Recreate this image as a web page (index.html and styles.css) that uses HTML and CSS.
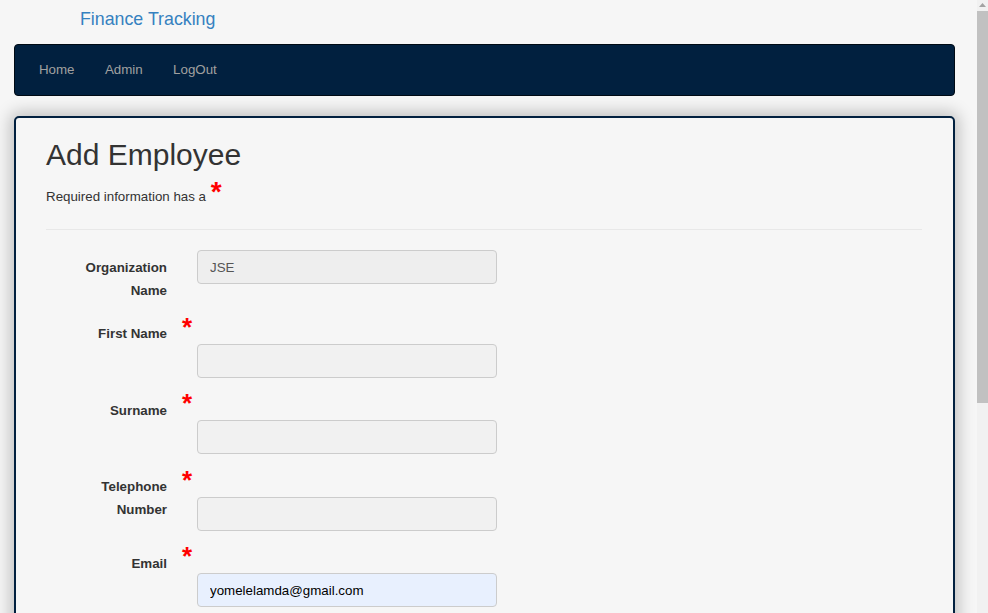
FILE: index.html
```html
<!DOCTYPE html>
<html lang="en">
<head>
<meta charset="utf-8">
<title>Add Employee - Finance Tracking</title>
<link rel="stylesheet" href="styles.css">
</head>
<body>
<div class="page">
  <header class="brand-bar">
    <a class="brand" href="#">Finance Tracking</a>
  </header>
  <nav class="navbar">
    <a class="nav-link" href="#">Home</a>
    <a class="nav-link" href="#">Admin</a>
    <a class="nav-link" href="#">LogOut</a>
  </nav>
  <main class="panel">
    <h2 class="title">Add Employee</h2>
    <p class="hint">Required information has a <span class="req-inline">*</span></p>
    <hr class="divider">
    <form class="form">
      <div class="group">
        <label class="label label-plain">Organization<br>Name</label>
        <div class="field">
          <input class="input input-readonly" type="text" value="JSE" readonly>
        </div>
      </div>
      <div class="group">
        <label class="label">First Name</label>
        <div class="field">
          <span class="req">*</span>
          <input class="input" type="text">
        </div>
      </div>
      <div class="group">
        <label class="label">Surname</label>
        <div class="field">
          <span class="req">*</span>
          <input class="input" type="text">
        </div>
      </div>
      <div class="group">
        <label class="label">Telephone<br>Number</label>
        <div class="field">
          <span class="req">*</span>
          <input class="input" type="text">
        </div>
      </div>
      <div class="group">
        <label class="label">Email</label>
        <div class="field">
          <span class="req">*</span>
          <input class="input input-filled" type="text" value="yomelelamda@gmail.com">
        </div>
      </div>
    </form>
  </main>
</div>
<div class="scrollbar" aria-hidden="true">
  <div class="scroll-button">
    <svg width="11" height="11" viewBox="0 0 11 11"><path d="M2 7 L5.5 3 L9 7 Z" fill="#a3a3a3"/></svg>
  </div>
  <div class="scroll-thumb"></div>
</div>
</body>
</html>
```

FILE: styles.css
```css
html {
  background: #f6f6f6;
}
body {
  margin: 0;
  font-family: "Liberation Sans", Arial, sans-serif;
  font-size: 13.33px;
  color: #333;
  background: #f6f6f6;
}
.page {
  width: 941px;
  margin-left: 14px;
  min-height: 924px;
  display: flex;
  flex-direction: column;
}
.brand-bar {
  height: 44px;
  padding-left: 66px;
  box-sizing: border-box;
  padding-top: 9px;
}
.brand {
  font-size: 17.8px;
  line-height: 20px;
  color: #3581c0;
  text-decoration: none;
}
.navbar {
  display: flex;
  height: 52px;
  box-sizing: border-box;
  background: #01203f;
  border: 1px solid #000a14;
  border-radius: 4px;
  padding-left: 8.8px;
}
.nav-link {
  display: block;
  padding: 15px 15.2px;
  line-height: 20px;
  color: #a0a0a0;
  text-decoration: none;
}
.panel {
  margin-top: 20px;
  flex: 1;
  background: #f6f6f6;
  border: 2px solid #01203f;
  border-radius: 5px;
  padding: 20px 30px;
  box-shadow: 0 0 16px 4px rgba(0, 0, 0, 0.22);
}
.title {
  margin: 0;
  font-size: 30px;
  font-weight: 500;
  line-height: 33px;
  color: #333;
}
.hint {
  margin: 16px 0 0;
  line-height: 20px;
}
.req-inline {
  color: #ff0000;
  font-size: 28px;
  font-weight: bold;
  line-height: 0;
  vertical-align: 0.5px;
  margin-left: 1px;
}
.divider {
  margin: 22px 1px 0 0;
  border: 0;
  border-top: 1px solid #e8e8e8;
  height: 0;
}
.form {
  margin-top: 20px;
}
.group {
  display: flex;
  margin-bottom: 10.45px;
}
.label {
  width: 121px;
  flex: none;
  text-align: right;
  font-weight: bold;
  line-height: 23px;
  padding-top: 10.5px;
  color: #333;
}
.label-plain {
  padding-top: 5.5px;
}
.field {
  margin-left: 15px;
  display: flex;
  flex-direction: column;
}
.req {
  display: block;
  height: 32px;
  line-height: 30px;
  font-size: 26px;
  font-weight: bold;
  color: #ff0000;
}
.input {
  margin-left: 15px;
  width: 300px;
  height: 34px;
  box-sizing: border-box;
  padding: 0 12px;
  border: 1px solid #cccccc;
  border-radius: 4px;
  background: #f1f1f1;
  font-family: "Liberation Sans", Arial, sans-serif;
  font-size: 13.33px;
  color: #555;
  outline: none;
}
.input-readonly {
  background: #eeeeee;
}
.input-filled {
  background: #e8f0fe;
  color: #000;
}
.scrollbar {
  position: fixed;
  top: 0;
  right: 0;
  width: 11px;
  height: 100%;
  background: #f1f1f1;
  display: flex;
  flex-direction: column;
}
.scroll-button {
  height: 11px;
  flex: none;
}
.scroll-button svg {
  display: block;
}
.scroll-thumb {
  height: 392px;
  background: #c1c1c1;
}
```
